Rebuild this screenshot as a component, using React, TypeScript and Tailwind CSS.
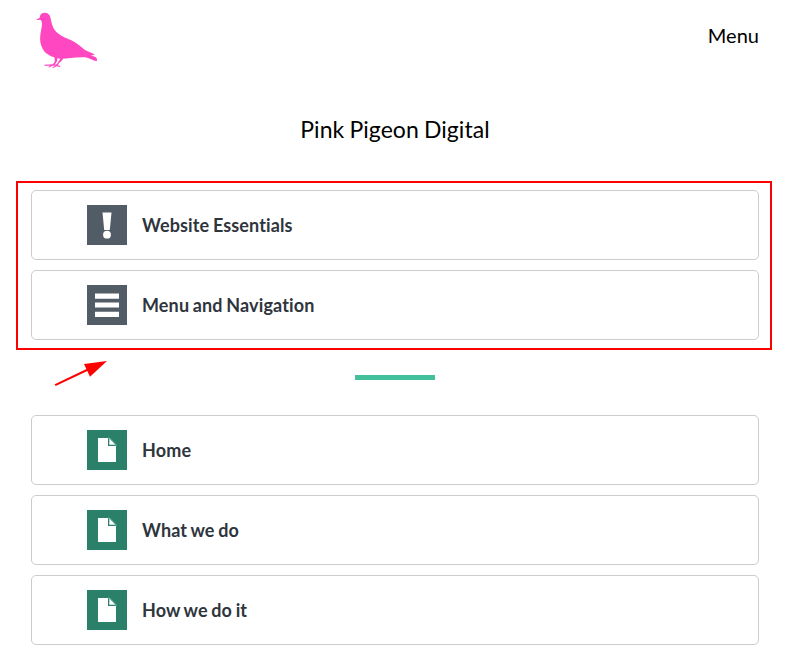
import type { ReactNode } from "react";

type IconKind = "essential" | "menu" | "page";

function Pigeon() {
  return (
    <svg viewBox="0 0 255 210" className="h-[70px] w-[85px]" role="img" aria-label="Pink Pigeon">
      <path
        fill="#ff47c2"
        d="M33 44 L44 38 C45 28 50 23 60 23 C71 24 76 31 77 41 C80 54 82 65 89 75 C100 90 120 98 139 106 C154 113 165 124 181 136 L207 147 L208 150 L198 151 L213 157 Q217 160 216 168 C206 168 197 161 187 158 C172 155 154 157 137 159 L114 161 C112 167 106 170 102 174 L99 181 L106 183 L105 186 L95 184 L84 189 L81 187 L92 182 L82 182 L72 188 L70 186 L76 182 L58 182 L58 179 L83 178 C89 174 91 168 88 157 C75 153 60 145 53 131 C46 119 44 106 46 91 C47 77 53 62 50 50 C48 44 45 43 40 45 Z M97 160 C98 169 93 174 89 179 L96 177 C99 171 103 166 106 161 Z"
      />
    </svg>
  );
}

function IconTile({ kind }: { kind: IconKind }) {
  return (
    <span className={`block h-10 w-10 ${kind === "page" ? "bg-[#2b8069]" : "bg-[#525c67]"}`}>
      <svg viewBox="0 0 40 40" className="h-10 w-10" fill="#fff">
        {kind === "essential" && (
          <>
            <path d="M15.5 7.5H24.5L22.8 25H17.2Z" />
            <circle cx="20" cy="29.7" r="3.9" />
          </>
        )}
        {kind === "menu" && <path d="M8 8.5H32V13.7H8ZM8 17.5H32V22.5H8ZM8 26.7H32V32H8Z" />}
        {kind === "page" && (
          <>
            <path d="M11 8H21V16H29V32H11Z" />
            <path d="M22.3 8.5L28.3 14.7H22.3Z" />
            <path d="M21 8H22.5L29 14.7V16" fill="none" stroke="#fff" strokeOpacity=".55" strokeWidth=".7" />
          </>
        )}
      </svg>
    </span>
  );
}

function Card({ kind, children }: { kind: IconKind; children: ReactNode }) {
  return (
    <a className="flex h-[70px] items-center gap-[15px] rounded-[5px] border border-[#ccc] bg-white pl-[55px]">
      <IconTile kind={kind} />
      <span className="text-lg leading-6 font-bold tracking-[0.13px] [word-spacing:-0.9px] text-[#2f353d]">{children}</span>
    </a>
  );
}

export default function App() {
  return (
    <div className="h-[650px] w-[795px] overflow-hidden bg-white font-['Lato',sans-serif] text-black [font-variant-ligatures:none]">
      <header className="flex h-[75px] items-start justify-between pt-[5px] pr-9 pl-[25px]">
        <Pigeon />
        <nav className="pt-[15px] text-xl leading-[30px]">Menu</nav>
      </header>
      <h1 className="mt-9 mr-[5px] h-[70px] text-center text-[23px] leading-9 tracking-[0.05px] [word-spacing:-0.8px]">Pink Pigeon Digital</h1>
      <main>
        <section className="relative ml-4 flex h-[169px] w-[756px] flex-col gap-2.5 border-2 border-[#f00] pt-[7px] pr-[11px] pl-[13px]">
          <Card kind="essential">Website Essentials</Card>
          <Card kind="menu">Menu and Navigation</Card>
          <svg viewBox="0 0 80 60" className="absolute top-[157px] left-[22px] h-[60px] w-20" fill="#f00">
            <path d="M15.2 45.2L48 29.5" stroke="#f00" strokeWidth="2" />
            <path d="M67 21L44 24L50 36.7Z" />
          </svg>
        </section>
        <div className="mt-[25px] ml-[355px] h-[5px] w-20 bg-[#43bf9c]" />
        <section className="mt-[35px] mr-9 ml-[31px] flex flex-col gap-2.5">
          <Card kind="page">Home</Card>
          <Card kind="page">What we do</Card>
          <Card kind="page">How we do it</Card>
        </section>
      </main>
    </div>
  );
}
